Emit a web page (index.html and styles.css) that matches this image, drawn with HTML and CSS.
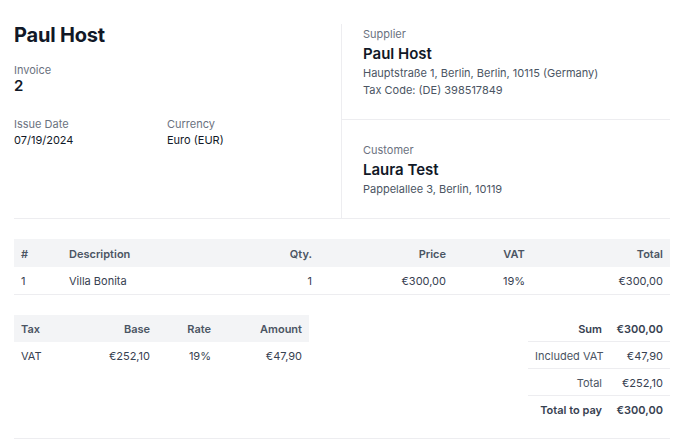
FILE: index.html
```html
<!DOCTYPE html>
<html lang="en">
<head>
<meta charset="utf-8">
<title>Invoice 2</title>
<link rel="stylesheet" href="styles.css">
</head>
<body>
<div class="page">
  <section class="top">
    <div class="meta">
      <h1 class="brand">Paul Host</h1>
      <div class="field invoice-no">
        <div class="label">Invoice</div>
        <div class="number">2</div>
      </div>
      <div class="meta-grid">
        <div class="field">
          <div class="label">Issue Date</div>
          <div class="value">07/19/2024</div>
        </div>
        <div class="field">
          <div class="label">Currency</div>
          <div class="value">Euro (EUR)</div>
        </div>
      </div>
    </div>
    <div class="parties">
      <div class="party supplier">
        <div class="label">Supplier</div>
        <div class="party-name">Paul Host</div>
        <div class="party-info">
          <div>Hauptstraße 1, Berlin, Berlin, 10115 (Germany)</div>
          <div>Tax Code: (DE) 398517849</div>
        </div>
      </div>
      <div class="party customer">
        <div class="label">Customer</div>
        <div class="party-name">Laura Test</div>
        <div class="party-info">
          <div>Pappelallee 3, Berlin, 10119</div>
        </div>
      </div>
    </div>
  </section>

  <table class="items">
    <colgroup>
      <col class="c-num"><col class="c-desc"><col class="c-qty"><col class="c-price"><col class="c-vat"><col class="c-total">
    </colgroup>
    <thead>
      <tr><th>#</th><th>Description</th><th class="r">Qty.</th><th class="r">Price</th><th class="c">VAT</th><th class="r">Total</th></tr>
    </thead>
    <tbody>
      <tr><td>1</td><td>Villa Bonita</td><td class="r">1</td><td class="r">€300,00</td><td class="c">19%</td><td class="r">€300,00</td></tr>
    </tbody>
  </table>

  <section class="bottom">
    <table class="taxes">
      <colgroup>
        <col class="t-tax"><col class="t-base"><col class="t-rate"><col class="t-amount">
      </colgroup>
      <thead>
        <tr><th>Tax</th><th class="r">Base</th><th class="r">Rate</th><th class="r">Amount</th></tr>
      </thead>
      <tbody>
        <tr><td>VAT</td><td class="r">€252,10</td><td class="r">19%</td><td class="r">€47,90</td></tr>
      </tbody>
    </table>

    <table class="summary">
      <tbody>
        <tr class="strong"><td class="s-label">Sum</td><td class="s-value">€300,00</td></tr>
        <tr><td class="s-label">Included VAT</td><td class="s-value">€47,90</td></tr>
        <tr><td class="s-label">Total</td><td class="s-value">€252,10</td></tr>
        <tr class="strong"><td class="s-label">Total to pay</td><td class="s-value">€300,00</td></tr>
      </tbody>
    </table>
  </section>
</div>
</body>
</html>
```

FILE: styles.css
```css
* { box-sizing: border-box; }

html, body {
  margin: 0;
  padding: 0;
  background: #ffffff;
}

body {
  font-family: Inter, "Noto Sans", "Liberation Sans", sans-serif;
  font-size: 11px;
  line-height: 16px;
  color: #1f2937;
}

.page {
  padding: 24px 16px 0 14px;
}

/* ---------- top section ---------- */
.top {
  display: grid;
  grid-template-columns: 328px 1fr;
  border-bottom: 1px solid #ededf0;
}

.meta {
  border-right: 1px solid #ededf0;
}

.brand {
  margin: 0;
  padding-top: 1px;
  font-size: 20px;
  line-height: 20px;
  font-weight: 700;
  color: #111827;
  letter-spacing: -0.2px;
}

.label {
  color: #6b7280;
}

.invoice-no {
  margin-top: 17px;
}

.number {
  font-size: 15px;
  line-height: 16px;
  font-weight: 600;
  color: #111827;
}

.meta-grid {
  display: grid;
  grid-template-columns: 153px 1fr;
  margin-top: 22px;
}

.value {
  color: #111827;
}

.party {
  padding: 22px 0 20px 21px;
}

.party.supplier {
  padding-top: 2px;
  border-bottom: 1px solid #ededf0;
}

.party-name {
  margin-top: 2px;
  font-size: 15px;
  line-height: 20px;
  font-weight: 600;
  color: #111827;
}

.party-info {
  margin-top: 1px;
  line-height: 17px;
  color: #4b5563;
}

/* ---------- tables ---------- */
table {
  border-collapse: collapse;
  table-layout: fixed;
}

th {
  background: #f3f4f6;
  font-weight: 600;
  color: #4b5563;
  text-align: left;
  height: 28px;
  padding: 2px 7px 0;
}

td {
  text-align: left;
  padding: 2px 7px 0;
  height: 27px;
  color: #374151;
}

.r { text-align: right; }
.c { text-align: center; }

.items {
  width: 656px;
  margin-top: 20px;
}

.items tbody tr {
  border-bottom: 1px solid #ededf0;
}

.c-num { width: 48px; }
.c-desc { width: 177px; }
.c-qty { width: 80px; }
.c-price { width: 134px; }
.c-vat { width: 122px; }
.c-total { width: 95px; }

.bottom {
  display: flex;
  justify-content: space-between;
  align-items: flex-start;
  margin-top: 20px;
  padding-bottom: 15px;
  border-bottom: 1px solid #ededf0;
}

.taxes {
  width: 295px;
}

.taxes th {
  height: 27px;
}

.t-tax { width: 66px; }
.t-base { width: 77px; }
.t-rate { width: 61px; }
.t-amount { width: 91px; }

.summary {
  width: 142px;
}

.summary tr {
  border-bottom: 1px solid #ededf0;
}

.summary tr:last-child {
  border-bottom: none;
}

.s-label {
  text-align: right;
  width: 81px;
  color: #4b5563;
  white-space: nowrap;
}

.s-value {
  text-align: right;
  width: 61px;
  color: #374151;
  white-space: nowrap;
}

.summary .strong td {
  font-weight: 600;
  color: #374151;
}
```
